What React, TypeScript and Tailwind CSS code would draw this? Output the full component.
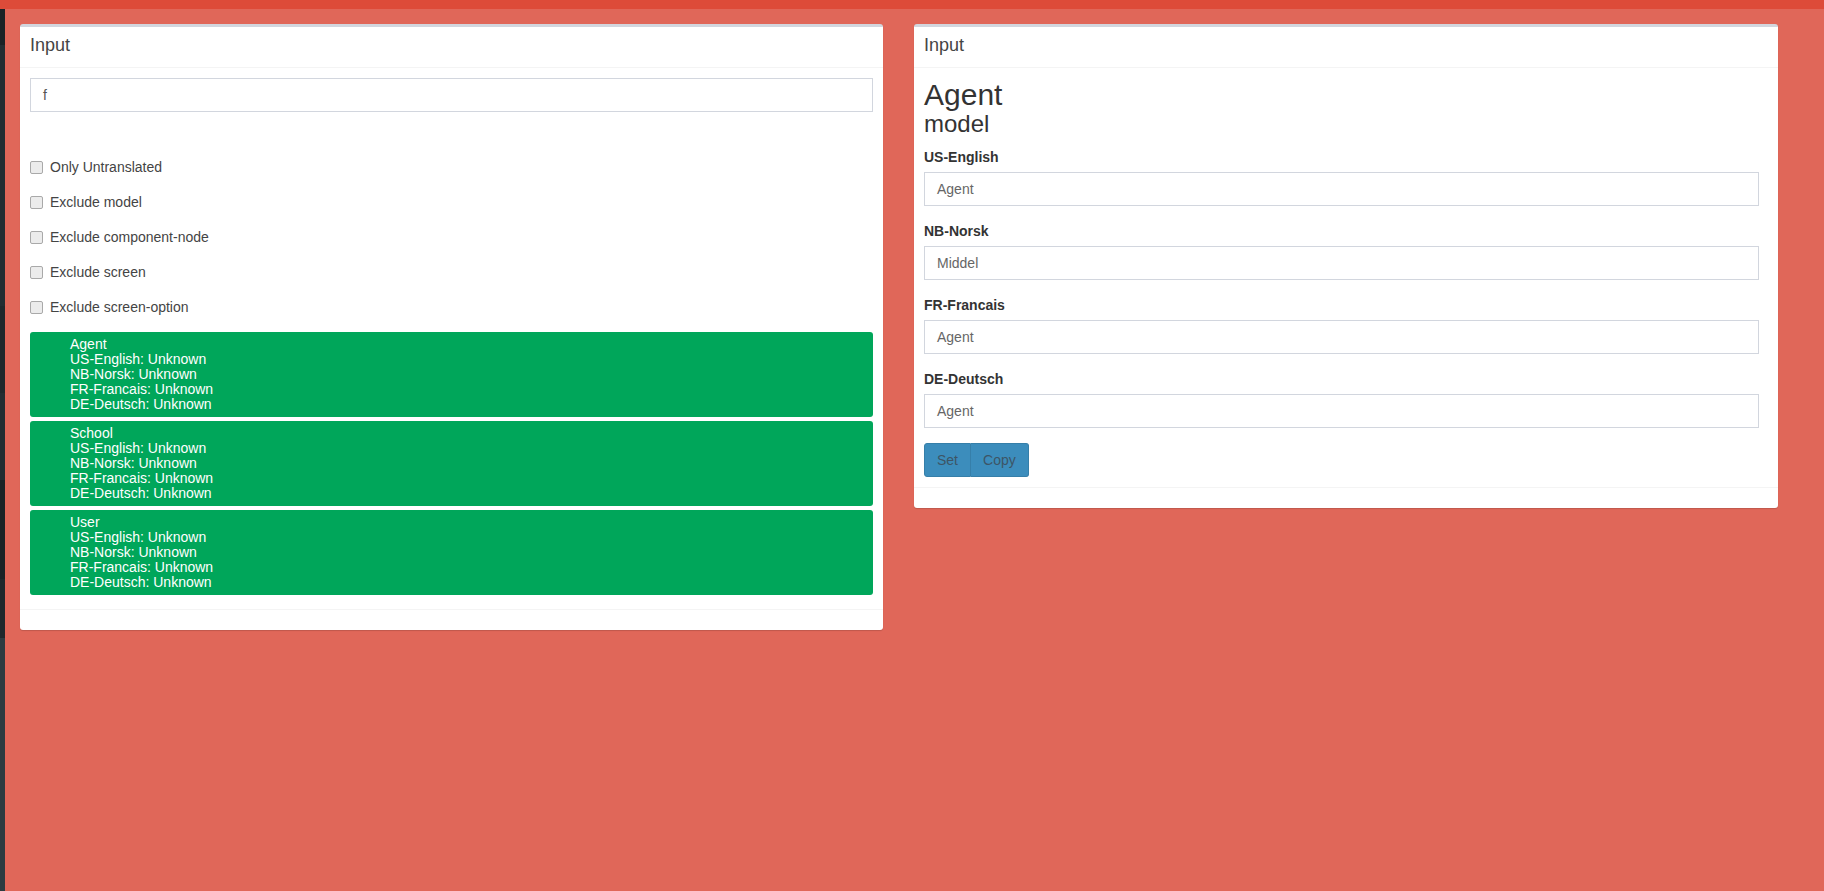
import React from "react";

const items = [
  { name: "Agent" },
  { name: "School" },
  { name: "User" },
];

const languages = ["US-English", "NB-Norsk", "FR-Francais", "DE-Deutsch"];

const filters = [
  "Only Untranslated",
  "Exclude model",
  "Exclude component-node",
  "Exclude screen",
  "Exclude screen-option",
];

const values: Record<string, string> = {
  "US-English": "Agent",
  "NB-Norsk": "Middel",
  "FR-Francais": "Agent",
  "DE-Deutsch": "Agent",
};

function Box({ children, className = "" }: { children: React.ReactNode; className?: string }) {
  return (
    <div
      className={`bg-white rounded-[3px] border-t-[3px] border-[#d2d6de] shadow-[0_1px_1px_rgba(0,0,0,0.15)] ${className}`}
    >
      <div className="px-[10px] pt-[8px] pb-[12px] border-b border-[#f4f4f4] h-[41px]">
        <h3 className="text-[18px] leading-[20px] text-[#444]">Input</h3>
      </div>
      {children}
      <div className="border-t border-[#f4f4f4] h-[21px]" />
    </div>
  );
}

function Checkbox({ label }: { label: string }) {
  return (
    <label className="flex items-center h-5 mb-[15px] text-[14px] text-[#444]">
      <span className="w-[13px] h-[13px] rounded-[2px] border border-[#a9a9a9] bg-[#ececec] mr-[7px]" />
      {label}
    </label>
  );
}

function Sidebar() {
  return (
    <div className="w-[5px] flex flex-col shrink-0">
      <div className="h-[36px] bg-[#1a2226]" />
      <div className="h-[261px] bg-[#222d32]" />
      <div className="h-[87px] bg-[#1e282c]" />
      <div className="h-[87px] bg-[#222d32]" />
      <div className="h-[99px] bg-[#1a2226]" />
      <div className="h-[59px] bg-[#1e282c]" />
      <div className="flex-1 bg-[#2c3b41]" />
    </div>
  );
}

export default function App() {
  return (
    <div
      className="h-[891px] w-full flex flex-col bg-[#e06759] overflow-hidden"
      style={{ fontFamily: '"Liberation Sans", Arial, sans-serif' }}
    >
      <div className="h-[9px] bg-[#dd4b39] shrink-0" />
      <div className="flex flex-1">
        <Sidebar />
        <div className="flex items-start gap-[31px] pl-[15px] pt-[15px]">
          <Box className="w-[863px]">
            <div className="p-[10px]">
              <div className="h-[34px] border border-[#d2d6de] px-3 flex items-center text-[14px] text-[#555]">
                f
              </div>
              <div className="mt-[45px]">
                {filters.map((f) => (
                  <Checkbox key={f} label={f} />
                ))}
              </div>
              <div className="flex flex-col gap-1">
                {items.map((it) => (
                  <div
                    key={it.name}
                    className="bg-[#00a65a] rounded-[3px] pl-10 py-[5px] text-white text-[14px] leading-[15px]"
                  >
                    <div>{it.name}</div>
                    {languages.map((l) => (
                      <div key={l}>{l}: Unknown</div>
                    ))}
                  </div>
                ))}
              </div>
              <div className="h-1" />
            </div>
          </Box>

          <Box className="w-[864px]">
            <div className="p-[10px]">
              <h2 className="text-[30px] leading-[33px] text-[#333]">Agent</h2>
              <h3 className="text-[24px] leading-[26px] text-[#333] mb-[10px]">model</h3>
              {languages.map((l) => (
                <div key={l} className="mb-[15px]">
                  <div className="text-[14px] leading-5 font-bold text-[#333] mb-[5px]">{l}</div>
                  <div className="h-[34px] w-[835px] border border-[#d2d6de] px-3 flex items-center text-[14px] text-[#666]">
                    {values[l]}
                  </div>
                </div>
              ))}
              <div className="flex">
                <button className="h-[34px] px-3 bg-[#3c8dbc] border border-[#367fa9] rounded-l-[3px] text-[14px] text-[#3d5566]">
                  Set
                </button>
                <button className="h-[34px] px-3 bg-[#3c8dbc] border border-l-0 border-[#367fa9] rounded-r-[3px] text-[14px] text-[#3d5566]">
                  Copy
                </button>
              </div>
            </div>
          </Box>
        </div>
      </div>
    </div>
  );
}
